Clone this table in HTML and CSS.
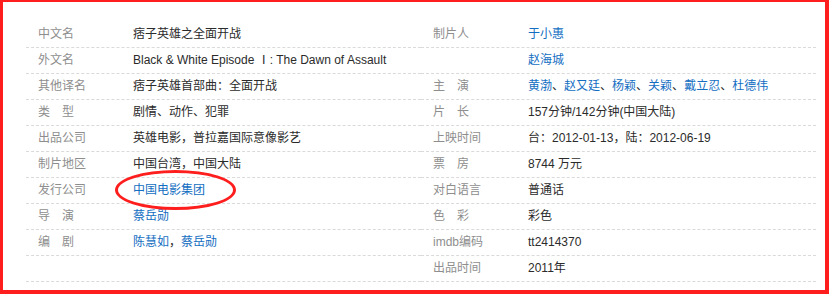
FILE: index.html
```html
<!DOCTYPE html>
<html lang="zh-CN">
<head>
<meta charset="utf-8">
<title>痞子英雄之全面开战</title>
<link rel="stylesheet" href="styles.css">
</head>
<body>
<div class="frame">
  <div class="basic-info">
    <dl class="block">
      <div class="item"><dt class="name">中文名</dt><dd class="value">痞子英雄之全面开战</dd></div>
      <div class="item"><dt class="name">外文名</dt><dd class="value">Black &amp; White Episode Ⅰ: The Dawn of Assault</dd></div>
      <div class="item"><dt class="name">其他译名</dt><dd class="value">痞子英雄首部曲：全面开战</dd></div>
      <div class="item"><dt class="name">类　型</dt><dd class="value">剧情、动作、犯罪</dd></div>
      <div class="item"><dt class="name">出品公司</dt><dd class="value">英雄电影，普拉嘉国际意像影艺</dd></div>
      <div class="item"><dt class="name">制片地区</dt><dd class="value">中国台湾，中国大陆</dd></div>
      <div class="item"><dt class="name">发行公司</dt><dd class="value"><a class="link" href="#">中国电影集团</a></dd></div>
      <div class="item"><dt class="name">导　演</dt><dd class="value"><a class="link" href="#">蔡岳勋</a></dd></div>
      <div class="item"><dt class="name">编　剧</dt><dd class="value"><a class="link" href="#">陈慧如</a>，<a class="link" href="#">蔡岳勋</a></dd></div>
      <div class="item"><dt class="name"></dt><dd class="value"></dd></div>
    </dl>
    <dl class="block">
      <div class="item"><dt class="name">制片人</dt><dd class="value"><a class="link" href="#">于小惠</a></dd></div>
      <div class="item"><dt class="name"></dt><dd class="value"><a class="link" href="#">赵海城</a></dd></div>
      <div class="item"><dt class="name">主　演</dt><dd class="value"><a class="link" href="#">黄渤</a>、<a class="link" href="#">赵又廷</a>、<a class="link" href="#">杨颖</a>、<a class="link" href="#">关颖</a>、<a class="link" href="#">戴立忍</a>、<a class="link" href="#">杜德伟</a></dd></div>
      <div class="item"><dt class="name">片　长</dt><dd class="value">157分钟/142分钟(中国大陆)</dd></div>
      <div class="item"><dt class="name">上映时间</dt><dd class="value">台：2012-01-13，陆：2012-06-19</dd></div>
      <div class="item"><dt class="name">票　房</dt><dd class="value">8744 万元</dd></div>
      <div class="item"><dt class="name">对白语言</dt><dd class="value">普通话</dd></div>
      <div class="item"><dt class="name">色　彩</dt><dd class="value">彩色</dd></div>
      <div class="item"><dt class="name">imdb编码</dt><dd class="value">tt2414370</dd></div>
      <div class="item"><dt class="name">出品时间</dt><dd class="value">2011年</dd></div>
    </dl>
  </div>
  <div class="mark"></div>
</div>
</body>
</html>
```

FILE: styles.css
```css
html, body {
  margin: 0;
  padding: 0;
  background: #fff;
}

body {
  font-family: "Liberation Sans", Arial, "Noto Sans CJK SC", sans-serif;
  font-size: 12px;
  color: #333;
}

.frame {
  position: relative;
  box-sizing: border-box;
  width: 829px;
  height: 294px;
  border: 3px solid #ff1e1e;
  border-top-width: 2px;
  border-right-width: 4px;
  border-bottom-width: 4px;
  padding: 20px 0 0 23px;
}

.basic-info {
  display: grid;
  grid-template-columns: 395px 395px;
}

.block {
  margin: 0;
  padding: 0;
}

.item {
  display: flex;
  height: 25px;
  line-height: 25px;
  border-bottom: 1px dashed #dadada;
}

.name {
  box-sizing: border-box;
  width: 107px;
  flex: none;
  padding-left: 12px;
  color: #8e8e8e;
  white-space: nowrap;
}

.value {
  margin: 0;
  white-space: nowrap;
  color: #2b2b2b;
}

.link {
  color: #136ec2;
  text-decoration: none;
}

.mark {
  position: absolute;
  left: 112px;
  top: 168px;
  width: 115px;
  height: 34px;
  border: 3px solid #ff1e1e;
  border-radius: 50%;
}
```
